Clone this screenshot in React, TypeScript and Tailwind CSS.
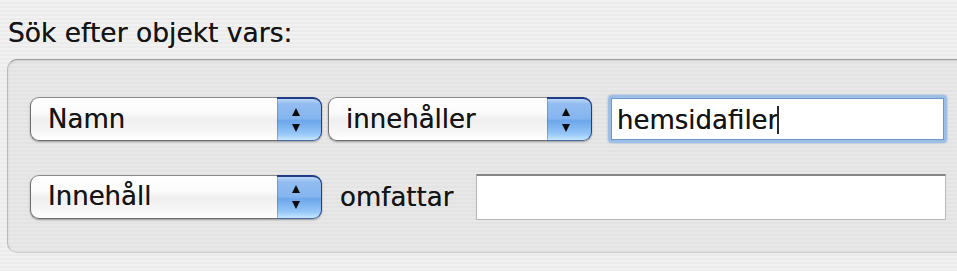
import React from "react";

function Popup({ label, w }: { label: string; w: string }) {
  return (
    <div className={`flex h-[44px] ${w} rounded-[9px] shadow-[0_1px_2px_rgba(0,0,0,0.35)]`}>
      <div className="flex flex-1 items-center rounded-l-[9px] border border-r-0 border-[#6f6f6f] border-t-[#8a8a8a] bg-[linear-gradient(to_bottom,#ffffff_0%,#fbfbfb_35%,#efefef_52%,#f5f5f5_75%,#ffffff_100%)] pl-[17px] pb-[1px]">
        {label}
      </div>
      <div className="flex w-[45px] flex-col items-center justify-center gap-[8px] rounded-r-[9px] border border-l-0 border-t-2 border-[#1f3c86] border-b-[#4a6aa8] bg-[linear-gradient(to_bottom,#bcd6f7_0%,#93bdf1_12%,#84b4ef_48%,#6ca6ea_53%,#95c7f8_85%,#c8e6ff_100%)] pr-[7px] shadow-[inset_1px_0_0_rgba(60,90,150,0.35)]">
        <div className="h-0 w-0 border-x-[4.5px] border-b-[8px] border-x-transparent border-b-[#0d0d0d]" />
        <div className="h-0 w-0 border-x-[4.5px] border-t-[8px] border-x-transparent border-t-[#0d0d0d]" />
      </div>
    </div>
  );
}

export default function App() {
  return (
    <div className="h-[271px] w-[957px] overflow-hidden bg-[repeating-linear-gradient(to_bottom,#f1f1f1_0px,#f1f1f1_2px,#ebebeb_2px,#ebebeb_4px)] font-['DejaVu_Sans',sans-serif] text-[26px] leading-[30px] text-[#151515] [text-shadow:0_0_0.6px_rgba(0,0,0,0.7)]">
      <div className="pl-[8px] pt-[18px] text-[26.5px]">Sök efter objekt vars:</div>
      <div className="ml-[7px] mt-[11px] flex h-[194px] w-[962px] flex-col rounded-[10px] border border-[#b9b9b9] border-t-[#9c9c9c] border-b-[#cbcbcb] bg-[repeating-linear-gradient(to_bottom,#e8e8e8_0px,#e8e8e8_2px,#e3e3e3_2px,#e3e3e3_4px)] pl-[22px] pt-[35px] shadow-[inset_0_1px_2px_rgba(0,0,0,0.10)]">
        <div className="flex h-[48px] items-center">
          <Popup label="Namn" w="w-[292px]" />
          <div className="ml-[6px]">
            <Popup label="innehåller" w="w-[264px]" />
          </div>
          <div className="ml-[16px] flex h-[48px] w-[339px] rounded-[4px] border-[3px] border-[#9dbfe5] shadow-[0_0_2px_rgba(110,150,210,0.8)]">
            <div className="flex flex-1 items-center border border-[#6f97cb] bg-white pl-[5px] pt-[2px]">
              <span>hemsidafiler</span>
              <span className="ml-[-1px] inline-block h-[28px] w-[2px] bg-[#2a2a2a]" />
            </div>
          </div>
        </div>
        <div className="mt-[30px] flex h-[47px] items-center">
          <Popup label="Innehåll" w="w-[292px]" />
          <span className="ml-[18px]">omfattar</span>
          <div className="ml-[23px] h-[46px] w-[470px] border border-[#b8b8b8] border-t-2 border-t-[#858585] bg-white" />
        </div>
      </div>
    </div>
  );
}
